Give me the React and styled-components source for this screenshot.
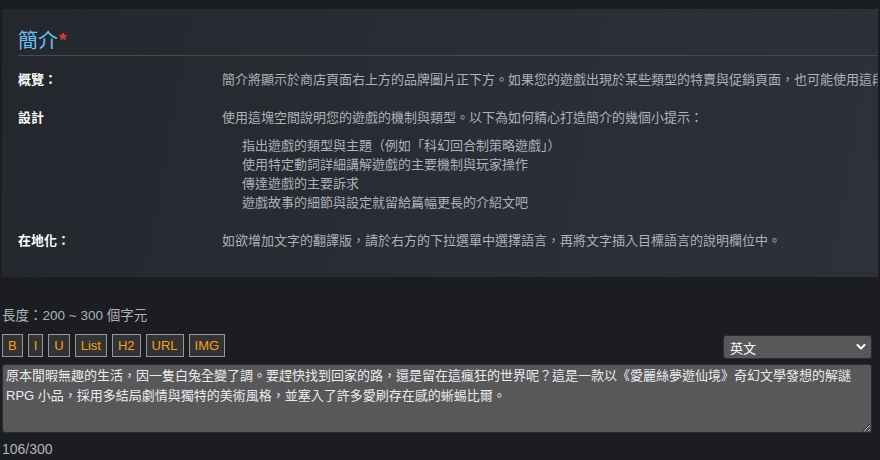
import React from "react";
import styled, { createGlobalStyle } from "styled-components";

const Global = createGlobalStyle`
  html, body { margin: 0; padding: 0; background: #1b1d23; }
  body {
    font-family: "Liberation Sans", "Noto Sans CJK TC", sans-serif;
    font-size: 13px;
    color: #acb2b8;
    overflow: hidden;
  }
`;

const Page = styled.div`
  width: 876px;
  padding: 9px 0 0 2px;
`;

const Panel = styled.section`
  background: linear-gradient(100deg, #24272d 0%, #2a2d35 50%, #2e313a 100%);
  padding: 16px 0 27px 16px;
  overflow: hidden;
`;

const Title = styled.h2`
  margin: 0;
  font-family: "Noto Sans CJK TC", sans-serif;
  font-weight: 400;
  font-size: 20px;
  line-height: 30px;
  color: #67c1f5;
  border-bottom: 1px solid #4b4a4a;
`;

const Required = styled.span`
  color: #e03a2c;
  font-size: 19px;
  vertical-align: 2px;
  margin-left: 1px;
  font-family: "Liberation Sans", sans-serif;
  font-weight: 700;
`;

const Rows = styled.div`
  display: grid;
  grid-template-columns: 204px 1fr;
  row-gap: 19px;
  padding-top: 14px;
  line-height: 19px;
`;

const Label = styled.div`
  color: #ffffff;
  font-weight: 700;
`;

const Desc = styled.div`
  color: #acb2b8;
  white-space: nowrap;
`;

const Tips = styled.ul`
  list-style: none;
  margin: 9px 0 0;
  padding: 0 0 0 20px;
`;

const Length = styled.div`
  margin-top: 29px;
  line-height: 19px;
  font-size: 13.5px;
  color: #acb2b8;
`;

const Toolbar = styled.div`
  display: flex;
  align-items: flex-start;
  justify-content: space-between;
  width: 870px;
  margin-top: 9px;
`;

const Buttons = styled.div`
  display: flex;
  gap: 5px;
`;

const FmtButton = styled.button`
  height: 23px;
  padding: 0 5px;
  background: #333333;
  border: 1px solid #979797;
  border-radius: 0;
  color: #f3a01e;
  font-family: "Liberation Sans", sans-serif;
  font-size: 13px;
  line-height: 21px;
  cursor: pointer;
`;

const SelectWrap = styled.div`
  position: relative;
  width: 149px;
  margin-top: 1px;
`;

const Select = styled.select`
  appearance: none;
  width: 149px;
  height: 24px;
  padding: 0 20px 0 6px;
  background: #58585b;
  border: 1px solid #2c2c2e;
  border-radius: 3px;
  color: #ffffff;
  font-family: "Noto Sans CJK TC", sans-serif;
  font-size: 13px;
  outline: none;
`;

const Chevron = styled.svg`
  position: absolute;
  right: 6px;
  top: 8px;
  pointer-events: none;
`;

const TextArea = styled.textarea`
  display: block;
  box-sizing: border-box;
  width: 870px;
  height: 69px;
  margin-top: 5px;
  padding: 1px 3px;
  background: #58585b;
  border: 1px solid #2c2c2e;
  border-radius: 3px;
  color: #ececec;
  font-family: "Liberation Sans", "Noto Sans CJK TC", sans-serif;
  font-size: 13px;
  line-height: 20px;
  outline: none;
`;

const Counter = styled.div`
  margin-top: 7px;
  line-height: 19px;
  font-size: 14px;
  color: #b5b5b5;
`;

const tips = [
  "指出遊戲的類型與主題（例如「科幻回合制策略遊戲」）",
  "使用特定動詞詳細講解遊戲的主要機制與玩家操作",
  "傳達遊戲的主要訴求",
  "遊戲故事的細節與設定就留給篇幅更長的介紹文吧",
];

const formats = ["B", "I", "U", "List", "H2", "URL", "IMG"];

const text =
  "原本閒暇無趣的生活，因一隻白兔全變了調。要趕快找到回家的路，還是留在這瘋狂的世界呢？這是一款以《愛麗絲夢遊仙境》奇幻文學發想的解謎 RPG 小品，採用多結局劇情與獨特的美術風格，並塞入了許多愛刷存在感的蜥蜴比爾。";

export default function App() {
  return (
    <>
      <Global />
      <Page>
        <Panel>
          <Title>
            簡介<Required>*</Required>
          </Title>
          <Rows>
            <Label>概覽：</Label>
            <Desc>
              簡介將顯示於商店頁面右上方的品牌圖片正下方。如果您的遊戲出現於某些類型的特賣與促銷頁面，也可能使用這段
            </Desc>
            <Label>設計</Label>
            <Desc>
              使用這塊空間說明您的遊戲的機制與類型。以下為如何精心打造簡介的幾個小提示：
              <Tips>
                {tips.map((t) => (
                  <li key={t}>{t}</li>
                ))}
              </Tips>
            </Desc>
            <Label>在地化：</Label>
            <Desc>如欲增加文字的翻譯版，請於右方的下拉選單中選擇語言，再將文字插入目標語言的說明欄位中。</Desc>
          </Rows>
        </Panel>
        <Length>長度：200 ~ 300 個字元</Length>
        <Toolbar>
          <Buttons>
            {formats.map((f) => (
              <FmtButton key={f} type="button">
                {f}
              </FmtButton>
            ))}
          </Buttons>
          <SelectWrap>
            <Select defaultValue="en">
              <option value="en">英文</option>
              <option value="tc">繁體中文</option>
            </Select>
            <Chevron width="10" height="8" viewBox="0 0 10 8">
              <path d="M1.5 2 L5 5.5 L8.5 2" fill="none" stroke="#ffffff" strokeWidth="2" strokeLinecap="round" strokeLinejoin="round" />
            </Chevron>
          </SelectWrap>
        </Toolbar>
        <TextArea defaultValue={text} />
        <Counter>106/300</Counter>
      </Page>
    </>
  );
}
